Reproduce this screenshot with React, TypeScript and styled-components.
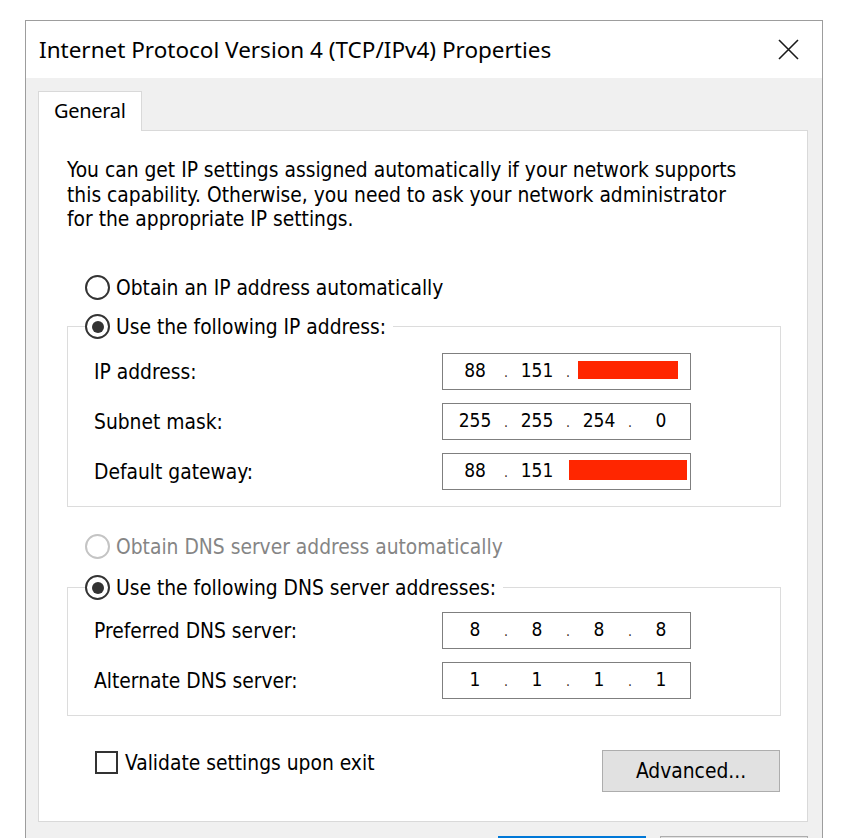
import React from "react";
import styled, { createGlobalStyle } from "styled-components";

const Global = createGlobalStyle`
  html, body {
    margin: 0;
    padding: 0;
    background: #ffffff;
    height: 838px;
    overflow: hidden;
  }
  body {
    font-family: "DejaVu Sans Condensed", "DejaVu Sans", sans-serif;
    font-stretch: semi-condensed;
    color: #000;
  }
`;

const Page = styled.div`
  padding: 20px 0 0 25px;
`;

const Window = styled.div`
  box-sizing: border-box;
  width: 798px;
  height: 880px;
  border: 1px solid #9d9d9d;
  border-bottom: none;
  background: #f0f0f0;
  display: flex;
  flex-direction: column;
`;

const TitleBar = styled.div`
  height: 57px;
  flex: none;
  background: #ffffff;
  display: flex;
  align-items: center;
  justify-content: space-between;
  padding: 0 23px 0 13px;
`;

const TitleText = styled.div`
  font-family: "Noto Sans", "Open Sans", sans-serif;
  font-stretch: normal;
  font-size: 22.5px;
  color: #000;
`;

const CloseIcon = styled.svg`
  width: 21px;
  height: 21px;
  display: block;
`;

const Body = styled.div`
  flex: 1;
  display: flex;
  flex-direction: column;
  padding: 13px 14px 0 12px;
`;

const TabStrip = styled.div`
  display: flex;
`;

const Tab = styled.div`
  box-sizing: border-box;
  width: 104px;
  height: 40px;
  margin-bottom: -1px;
  position: relative;
  z-index: 1;
  background: #ffffff;
  border: 1px solid #d9d9d9;
  border-bottom: none;
  display: flex;
  align-items: center;
  padding: 0 0 2px 15px;
  font-family: "Noto Sans", "Open Sans", sans-serif;
  font-stretch: normal;
  font-size: 20px;
  letter-spacing: -0.3px;
`;

const Panel = styled.div`
  box-sizing: border-box;
  height: 692px;
  flex: none;
  background: #ffffff;
  border: 1px solid #d9d9d9;
  display: flex;
  flex-direction: column;
  padding: 27px 26px 0 28px;
  font-size: 20.8px;
`;

const Intro = styled.p`
  margin: 0;
  line-height: 24.5px;
  white-space: nowrap;
`;

const OptionRow = styled.label<{ $mt: number; $disabled?: boolean }>`
  display: flex;
  align-items: center;
  gap: 6px;
  height: 26px;
  margin: ${(p) => p.$mt}px 0 0 18px;
  color: ${(p) => (p.$disabled ? "#858585" : "#000")};
`;

const RadioCircle = styled.span<{ $checked?: boolean; $disabled?: boolean }>`
  box-sizing: border-box;
  flex: none;
  width: 25px;
  height: 25px;
  border-radius: 50%;
  border: 2px solid ${(p) => (p.$disabled ? "#c4c4c4" : "#333333")};
  background: #ffffff;
  display: flex;
  align-items: center;
  justify-content: center;
  &::after {
    content: "";
    display: ${(p) => (p.$checked ? "block" : "none")};
    width: 12px;
    height: 12px;
    border-radius: 50%;
    background: #333333;
  }
`;

const Group = styled.fieldset<{ $mt: number; $pt: number }>`
  margin: ${(p) => p.$mt}px 0 0 0;
  padding: ${(p) => p.$pt}px 0 16px 26px;
  border: 1px solid #dcdcdc;
  min-width: 0;
  display: flex;
  flex-direction: column;
  gap: 13px;
`;

const Legend = styled.legend`
  padding: 0 7px 0 0;
  margin-left: -9px;
  display: flex;
  align-items: center;
  gap: 6px;
  height: 26px;
`;

const FieldRow = styled.div`
  display: grid;
  grid-template-columns: 348px 249px;
  align-items: center;
`;

const FieldLabel = styled.span`
  padding-top: 1px;
`;

const IpBox = styled.div`
  box-sizing: border-box;
  height: 37px;
  border: 1px solid #7f7f7f;
  background: #ffffff;
  display: flex;
  align-items: center;
  padding: 0 0 2px 3px;
  font-size: 19px;
`;

const Octet = styled.span`
  width: 58px;
  text-align: center;
  flex: none;
`;

const Dot = styled.span`
  width: 4px;
  flex: none;
  display: flex;
  justify-content: center;
  font-size: 14px;
  padding-top: 4px;
  color: #3a2a1a;
`;

const Redaction = styled.span<{ $w: number; $h: number; $ml: number }>`
  flex: none;
  width: ${(p) => p.$w}px;
  height: ${(p) => p.$h}px;
  margin-left: ${(p) => p.$ml}px;
  background: #ff2600;
`;

const BottomRow = styled.div`
  display: flex;
  justify-content: space-between;
  align-items: flex-start;
  margin: 34px 1px 0 28px;
`;

const CheckRow = styled.label`
  display: flex;
  align-items: center;
  gap: 7px;
  margin-top: 1px;
`;

const CheckBox = styled.span`
  box-sizing: border-box;
  width: 23px;
  height: 23px;
  border: 2px solid #333333;
  background: #ffffff;
  flex: none;
`;

const DialogButton = styled.button<{ $w: number; $default?: boolean }>`
  box-sizing: border-box;
  width: ${(p) => p.$w}px;
  height: 42px;
  background: #e1e1e1;
  border: 1px solid ${(p) => (p.$default ? "#0078d7" : "#adadad")};
  box-shadow: ${(p) => (p.$default ? "inset 0 0 0 1px #0078d7" : "none")};
  font-family: "DejaVu Sans Condensed", "DejaVu Sans", sans-serif;
  font-stretch: semi-condensed;
  font-size: 20.8px;
  color: #000;
  padding: 0;
`;

const FooterButton = styled(DialogButton)`
  padding-top: 16px;
`;

const Footer = styled.div`
  display: flex;
  justify-content: flex-end;
  gap: 14px;
  margin-top: 14px;
`;

type Part =
  | { kind: "num"; v: string }
  | { kind: "dot" }
  | { kind: "red"; w: number; h: number; ml: number };

const IpField: React.FC<{ parts: Part[] }> = ({ parts }) => (
  <IpBox>
    {parts.map((p, i) =>
      p.kind === "num" ? (
        <Octet key={i}>{p.v}</Octet>
      ) : p.kind === "dot" ? (
        <Dot key={i}>.</Dot>
      ) : (
        <Redaction key={i} $w={p.w} $h={p.h} $ml={p.ml} />
      )
    )}
  </IpBox>
);

const full = (a: string, b: string, c: string, d: string): Part[] => [
  { kind: "num", v: a },
  { kind: "dot" },
  { kind: "num", v: b },
  { kind: "dot" },
  { kind: "num", v: c },
  { kind: "dot" },
  { kind: "num", v: d },
];

export default function App() {
  return (
    <>
      <Global />
      <Page>
        <Window>
          <TitleBar>
            <TitleText>Internet Protocol Version 4 (TCP/IPv4) Properties</TitleText>
            <CloseIcon viewBox="0 0 21 21">
              <path d="M1 1 L20 20 M20 1 L1 20" stroke="#1a1a1a" strokeWidth="1.6" fill="none" />
            </CloseIcon>
          </TitleBar>
          <Body>
            <TabStrip>
              <Tab>General</Tab>
            </TabStrip>
            <Panel>
              <Intro>
                You can get IP settings assigned automatically if your network supports
                <br />
                this capability. Otherwise, you need to ask your network administrator
                <br />
                for the appropriate IP settings.
              </Intro>
              <OptionRow $mt={43}>
                <RadioCircle />
                Obtain an IP address automatically
              </OptionRow>
              <Group $mt={13} $pt={13}>
                <Legend>
                  <RadioCircle $checked />
                  Use the following IP address:
                </Legend>
                <FieldRow>
                  <FieldLabel>IP address:</FieldLabel>
                  <IpField
                    parts={[
                      { kind: "num", v: "88" },
                      { kind: "dot" },
                      { kind: "num", v: "151" },
                      { kind: "dot" },
                      { kind: "red", w: 100, h: 18, ml: 8 },
                    ]}
                  />
                </FieldRow>
                <FieldRow>
                  <FieldLabel>Subnet mask:</FieldLabel>
                  <IpField parts={full("255", "255", "254", "0")} />
                </FieldRow>
                <FieldRow>
                  <FieldLabel>Default gateway:</FieldLabel>
                  <IpField
                    parts={[
                      { kind: "num", v: "88" },
                      { kind: "dot" },
                      { kind: "num", v: "151" },
                      { kind: "red", w: 118, h: 20, ml: 3 },
                    ]}
                  />
                </FieldRow>
              </Group>
              <OptionRow $mt={27} $disabled>
                <RadioCircle $disabled />
                Obtain DNS server address automatically
              </OptionRow>
              <Group $mt={15} $pt={11}>
                <Legend>
                  <RadioCircle $checked />
                  Use the following DNS server addresses:
                </Legend>
                <FieldRow>
                  <FieldLabel>Preferred DNS server:</FieldLabel>
                  <IpField parts={full("8", "8", "8", "8")} />
                </FieldRow>
                <FieldRow>
                  <FieldLabel>Alternate DNS server:</FieldLabel>
                  <IpField parts={full("1", "1", "1", "1")} />
                </FieldRow>
              </Group>
              <BottomRow>
                <CheckRow>
                  <CheckBox />
                  Validate settings upon exit
                </CheckRow>
                <DialogButton $w={178}>Advanced...</DialogButton>
              </BottomRow>
            </Panel>
            <Footer>
              <FooterButton $w={148} $default>OK</FooterButton>
              <FooterButton $w={148}>Cancel</FooterButton>
            </Footer>
          </Body>
        </Window>
      </Page>
    </>
  );
}
